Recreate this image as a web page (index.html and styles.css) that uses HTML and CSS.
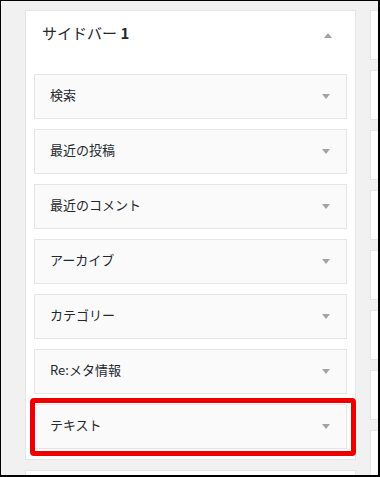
FILE: index.html
```html
<!DOCTYPE html>
<html lang="ja">
<head>
<meta charset="utf-8">
<title>ウィジェット</title>
<link rel="stylesheet" href="styles.css">
</head>
<body>
<div class="frame">
  <div class="columns">
    <div class="main-col">
      <div class="sidebar-panel">
        <div class="sidebar-title">
          <h2 class="sidebar-name">サイドバー <b>1</b></h2>
          <span class="arrow-up"></span>
        </div>
        <ul class="widget-list">
          <li class="widget"><span class="label">検索</span><span class="arrow-down"></span></li>
          <li class="widget"><span class="label">最近の投稿</span><span class="arrow-down"></span></li>
          <li class="widget"><span class="label">最近のコメント</span><span class="arrow-down"></span></li>
          <li class="widget"><span class="label">アーカイブ</span><span class="arrow-down"></span></li>
          <li class="widget"><span class="label">カテゴリー</span><span class="arrow-down"></span></li>
          <li class="widget"><span class="label">Re:メタ情報</span><span class="arrow-down"></span></li>
          <li class="widget highlighted"><span class="label">テキスト</span><span class="arrow-down"></span><span class="highlight-box"></span></li>
        </ul>
      </div>
      <div class="sidebar-panel next-panel"></div>
    </div>
    <div class="side-col">
      <div class="side-box"></div>
      <div class="side-box"></div>
      <div class="side-box"></div>
      <div class="side-box"></div>
      <div class="side-box"></div>
      <div class="side-box"></div>
      <div class="side-box"></div>
      <div class="side-box"></div>
    </div>
  </div>
</div>
</body>
</html>
```
FILE: styles.css
```css
html, body {
  margin: 0;
  padding: 0;
}
body {
  font-family: "Noto Sans CJK JP", "Noto Sans", sans-serif;
  color: #23282d;
}
.frame {
  box-sizing: border-box;
  width: 380px;
  height: 477px;
  border-style: solid;
  border-color: #000;
  border-width: 1px 2px 2px 1px;
  background: #f1f1f1;
  overflow: hidden;
}
.columns {
  display: flex;
  padding: 9px 0 0 24px;
  gap: 14px;
}
.main-col {
  flex: 0 0 331px;
  display: flex;
  flex-direction: column;
  gap: 10px;
}
.sidebar-panel {
  box-sizing: border-box;
  background: #fff;
  border: 1px solid #e5e5e5;
}
.next-panel {
  height: 60px;
}
.sidebar-title {
  height: 48px;
  display: flex;
  align-items: center;
  justify-content: space-between;
  padding: 0 23px 0 16px;
}
.sidebar-name {
  margin: 0 0 4px;
  font-size: 15px;
  font-weight: normal;
  line-height: 20px;
}
.sidebar-name b {
  font-weight: bold;
}
.arrow-up {
  width: 0;
  height: 0;
  border-left: 4px solid transparent;
  border-right: 4px solid transparent;
  border-bottom: 5px solid #a0a5aa;
}
.widget-list {
  list-style: none;
  margin: 15px 0 0;
  padding: 0 8px 10px;
  display: flex;
  flex-direction: column;
  gap: 10px;
}
.widget {
  position: relative;
  box-sizing: border-box;
  height: 45px;
  background: #fafafa;
  border: 1px solid #e5e5e5;
  display: flex;
  align-items: center;
  justify-content: space-between;
  padding: 0 16px 0 15px;
  font-size: 13px;
  line-height: 18px;
}
.label {
  margin-bottom: 4px;
}
.arrow-down {
  width: 0;
  height: 0;
  border-left: 4px solid transparent;
  border-right: 4px solid transparent;
  border-top: 5px solid #a0a5aa;
}
.highlight-box {
  position: absolute;
  left: -5px;
  top: -7px;
  box-sizing: border-box;
  width: 326px;
  height: 58px;
  border: 5px solid #ee0000;
  border-radius: 4px;
}
.side-col {
  flex: 0 0 40px;
  display: flex;
  flex-direction: column;
  gap: 10px;
}
.side-box {
  box-sizing: border-box;
  height: 50px;
  background: #fff;
  border: 1px solid #e5e5e5;
}
```
